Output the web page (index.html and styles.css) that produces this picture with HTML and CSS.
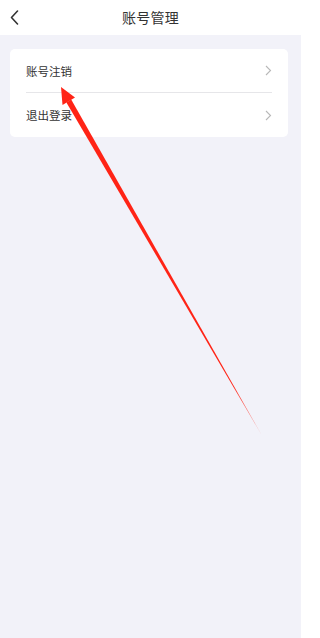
FILE: index.html
```html
<!DOCTYPE html>
<html lang="zh-CN">
<head>
<meta charset="utf-8">
<title>账号管理</title>
<link rel="stylesheet" href="styles.css">
</head>
<body>
<div class="app">
  <header class="header">
    <div class="back">
      <svg width="9" height="15" viewBox="0 0 9 15"><path d="M7.5 1 L1.5 7.5 L7.5 14" fill="none" stroke="#333" stroke-width="1.6" stroke-linecap="round" stroke-linejoin="round"/></svg>
    </div>
    <h1 class="title">账号管理</h1>
    <div class="spacer"></div>
  </header>
  <section class="card">
    <div class="row">
      <span class="label">账号注销</span>
      <svg class="chev" width="7" height="11" viewBox="0 0 7 11"><path d="M1 1 L5.5 5.5 L1 10" fill="none" stroke="#b8b8b8" stroke-width="1.1"/></svg>
    </div>
    <div class="row">
      <span class="label">退出登录</span>
      <svg class="chev" width="7" height="11" viewBox="0 0 7 11"><path d="M1 1 L5.5 5.5 L1 10" fill="none" stroke="#b8b8b8" stroke-width="1.1"/></svg>
    </div>
  </section>
</div>
<svg class="arrow" width="303" height="638" viewBox="0 0 303 638">
  <defs>
    <linearGradient id="fade" x1="69" y1="101" x2="262" y2="436" gradientUnits="userSpaceOnUse">
      <stop offset="0" stop-color="#ff2416"/>
      <stop offset="0.85" stop-color="#ff2416"/>
      <stop offset="1" stop-color="#ff2416" stop-opacity="0.35"/>
    </linearGradient>
  </defs>
  <polygon points="71.2,99.6 66.4,102.4 262.5,436.5" fill="url(#fade)"/>
  <polygon points="61,87 75,97.5 62.5,105" fill="#ff2416"/>
</svg>
</body>
</html>
```

FILE: styles.css
```css
html, body {
  margin: 0;
  padding: 0;
  background: #ffffff;
}

body {
  font-family: "Noto Sans CJK SC", "Noto Sans", sans-serif;
  color: #333333;
  position: relative;
  width: 303px;
  min-height: 638px;
}

.app {
  width: 301px;
  min-height: 638px;
  background: #f2f2f9;
}

.header {
  height: 35px;
  background: #ffffff;
  display: grid;
  grid-template-columns: 40px 1fr 40px;
  align-items: center;
}

.back {
  display: flex;
  align-items: center;
  padding-left: 10px;
  height: 35px;
}

.title {
  margin: 0;
  font-size: 14px;
  font-weight: 400;
  text-align: center;
  color: #333333;
  line-height: 35px;
  letter-spacing: 0.2px;
}

.card {
  margin: 14px 13px 0 10px;
  background: #ffffff;
  border-radius: 5px;
}

.row {
  margin: 0 16px;
  height: 44px;
  box-sizing: border-box;
  display: flex;
  align-items: center;
  justify-content: space-between;
}

.row:first-child {
  border-bottom: 1px solid #e6e6e9;
}

.label {
  font-size: 11.5px;
  color: #333333;
}

.chev {
  display: block;
}

.arrow {
  position: absolute;
  top: 0;
  left: 0;
  pointer-events: none;
}
```
